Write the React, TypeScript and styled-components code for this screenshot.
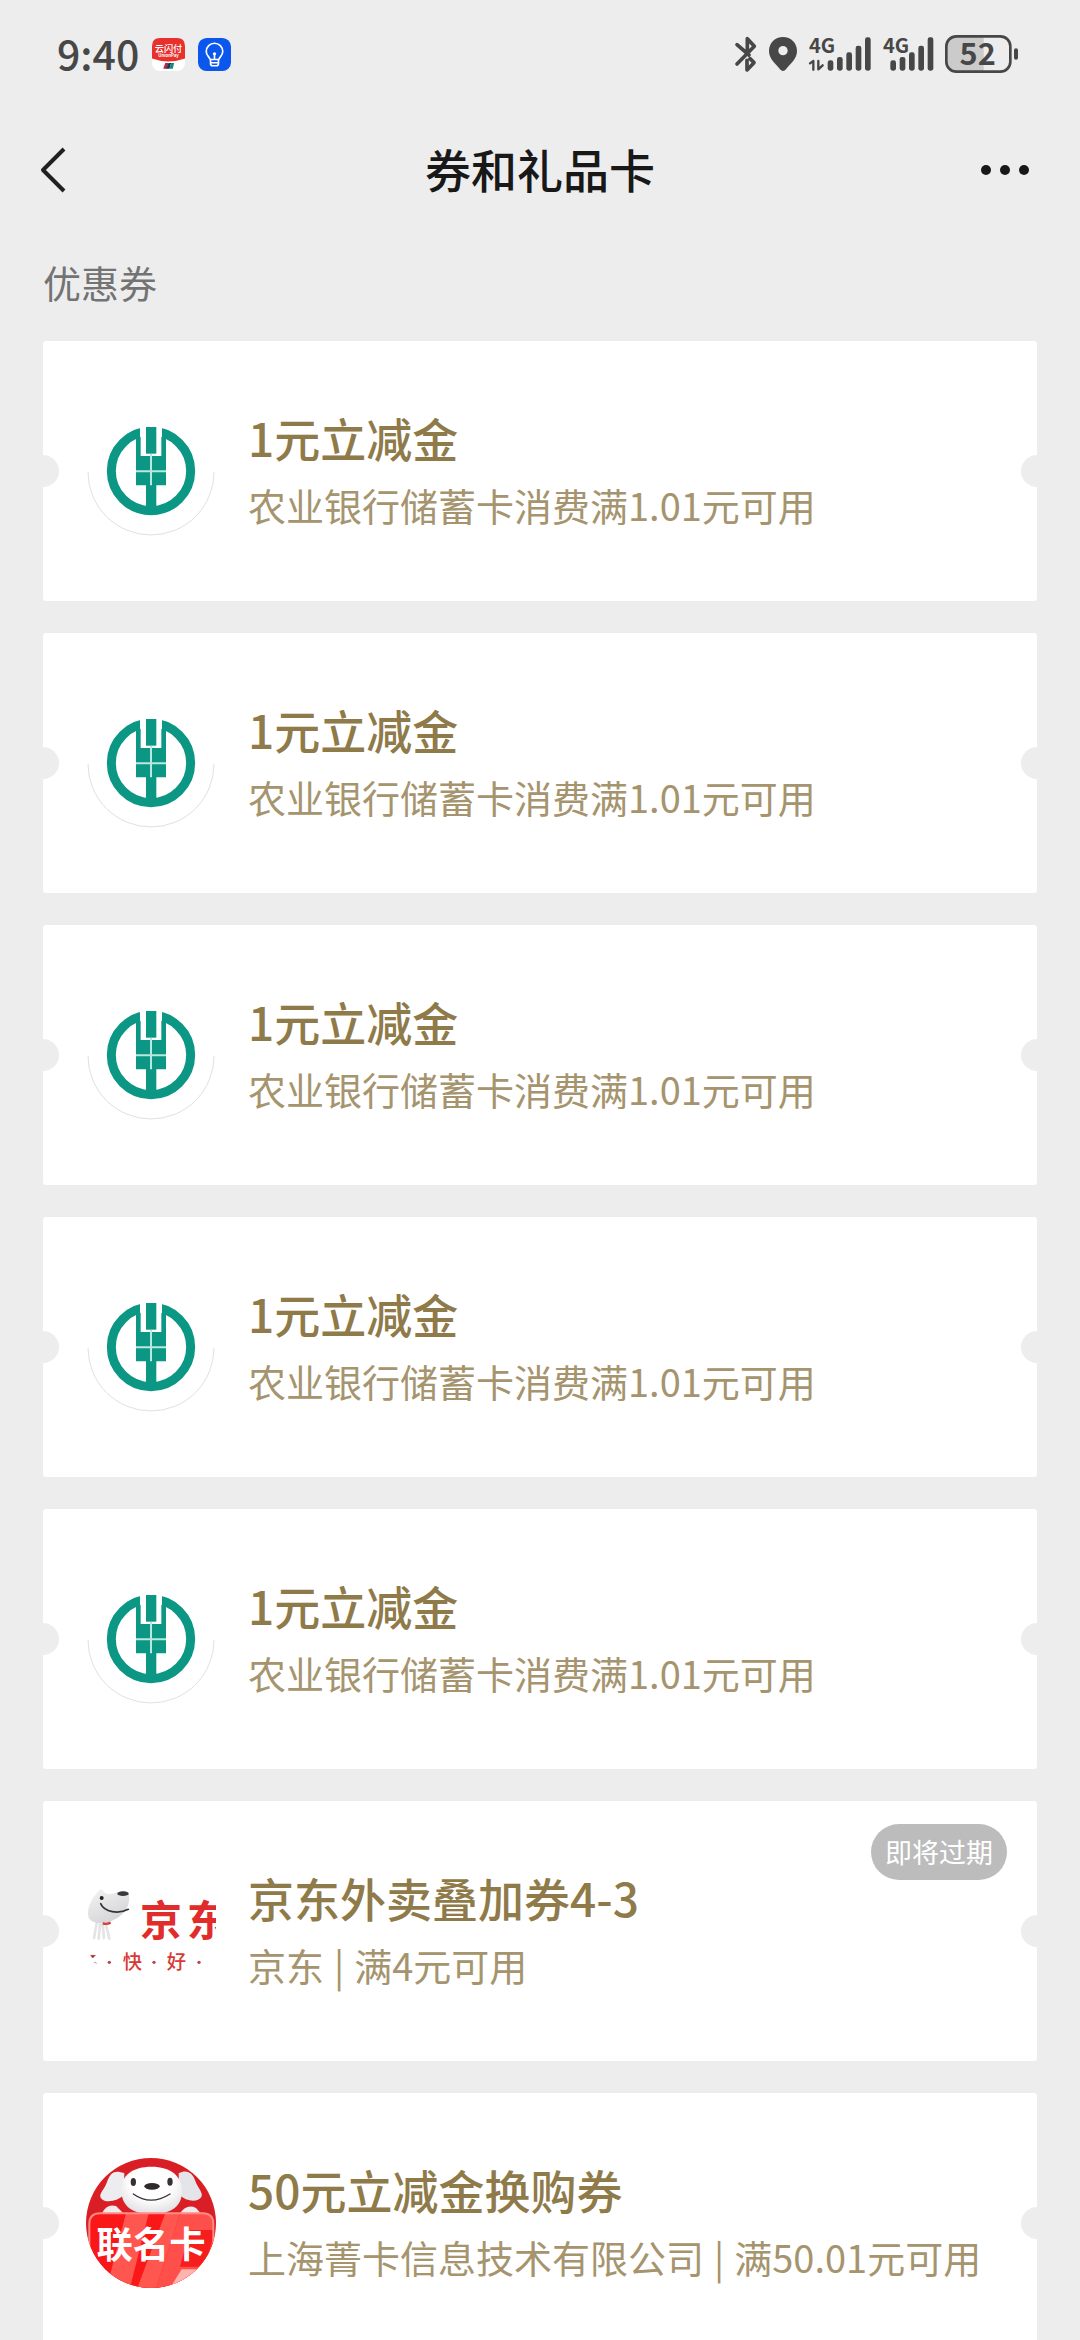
import React from "react";
import styled, { createGlobalStyle } from "styled-components";

const FONT = '"Noto Sans CJK SC", "Noto Sans", sans-serif';

const GlobalStyle = createGlobalStyle`
  * { box-sizing: border-box; }
  body { margin: 0; background: #ededed; font-family: ${FONT}; }
  h1, h2, h3, p, ul { margin: 0; padding: 0; }
  ul { list-style: none; }
`;

const Page = styled.div`
  display: flex;
  flex-direction: column;
  height: 100vh;
  background: #ededed;
`;

const StatusBar = styled.div`
  display: flex;
  flex: none;
  align-items: center;
  justify-content: space-between;
  height: 108px;
  padding: 0 61px 0 57px;
  color: #474747;
`;

const StatusGroup = styled.div<{ $gap: number }>`
  display: flex;
  align-items: center;
  gap: ${(p) => p.$gap}px;
  svg { display: block; overflow: visible; }
`;

const Clock = styled.time`
  padding-bottom: 5px;
  font-size: 41px;
  font-weight: 500;
  line-height: 56px;
`;

const NavBar = styled.header`
  display: grid;
  flex: none;
  grid-template-columns: 120px 1fr 120px;
  align-items: center;
  height: 124px;
`;

const NavTitle = styled.h1`
  padding-bottom: 4px;
  color: #181818;
  font-size: 46px;
  font-weight: 500;
  line-height: 68px;
  text-align: center;
`;

const NavButton = styled.button<{ $end?: boolean }>`
  display: flex;
  align-items: center;
  justify-content: ${(p) => (p.$end ? "flex-end" : "flex-start")};
  height: 100%;
  padding: 0 ${(p) => (p.$end ? 50 : 40)}px;
  border: 0;
  background: none;
  cursor: pointer;
  svg { flex: none; }
`;

const Content = styled.main`
  flex: 1;
  min-height: 0;
  overflow-y: auto;
  padding: 22px 43px 32px;
  scrollbar-width: none;
`;

const SectionTitle = styled.h2`
  margin-bottom: 31px;
  color: #737373;
  font-size: 38px;
  font-weight: 400;
  line-height: 56px;
`;

const CouponList = styled.ul`
  display: flex;
  flex-direction: column;
  gap: 32px;
`;

const CouponCard = styled.a`
  position: relative;
  display: flex;
  align-items: center;
  gap: 32px;
  min-height: 260px;
  padding: 43px;
  overflow: hidden;
  border-radius: 3px;
  background: #fff;
  color: #8f7a49;
  text-decoration: none;
  &::before,
  &::after {
    content: "";
    position: absolute;
    top: calc(50% - 16px);
    width: 32px;
    height: 32px;
    border-radius: 50%;
    background: #ededed;
  }
  &::before { left: -16px; }
  &::after { right: -16px; }
`;

const Logo = styled.svg`
  display: block;
  flex: none;
  width: 130px;
  height: 130px;
`;

const CouponText = styled.div`
  flex: 1;
  min-width: 0;
`;

const CouponName = styled.h3`
  font-size: 46px;
  font-weight: 500;
  line-height: 68px;
`;

const CouponRule = styled.p`
  color: #a5946d;
  font-size: 38px;
  line-height: 68px;
  white-space: nowrap;
`;

const Divider = styled.span`
  margin: 0 10px;
`;

const Badge = styled.span`
  position: absolute;
  top: 23px;
  right: 30px;
  padding: 0 14px;
  border-radius: 28px;
  background: #bcbcbc;
  color: #fff;
  font-size: 27px;
  line-height: 56px;
`;

function UnionPayIcon() {
  return (
    <svg width="33" height="33" viewBox="0 0 100 100" aria-hidden="true">
      <rect width="100" height="100" rx="24" fill="#fff" />
      <path d="M0 62V24Q0 0 24 0H76Q100 0 100 24V62Q50 80 0 62Z" fill="#e8302c" />
      <text x="50" y="42" textAnchor="middle" fontSize="28" fontWeight="500" fill="#fff" fontFamily={FONT}>云闪付</text>
      <text x="50" y="59" textAnchor="middle" fontSize="13" fontWeight="700" fill="#fff" fontFamily={FONT}>UnionPay</text>
      <path d="M40 76H50L45 93H34Z" fill="#b7284c" />
      <path d="M50 76H58L53 93H43Z" fill="#123a52" />
      <path d="M58 76H67L63 93H53Z" fill="#168877" />
    </svg>
  );
}

function BulbIcon() {
  return (
    <svg width="33" height="33" viewBox="0 0 100 100" fill="none" stroke="#fff" strokeWidth="5" strokeLinecap="round" strokeLinejoin="round" aria-hidden="true">
      <rect width="100" height="100" rx="26" fill="#0b57ee" stroke="none" />
      <path d="M37 65C34 56 25 54 25 41A25 25 0 0 1 75 41C75 54 66 56 63 65Z" />
      <path d="M38 66V78Q38 84 44 84H56Q62 84 62 78V66M38 75H62M50 52V64" />
      <circle cx="50" cy="48" r="5" fill="#fff" stroke="none" />
    </svg>
  );
}

function BluetoothIcon() {
  return (
    <svg width="22" height="36" viewBox="0 0 66 108" fill="none" stroke="#474747" strokeWidth="11" strokeLinecap="round" strokeLinejoin="round" aria-label="蓝牙">
      <path d="M6 26L42 57M6 84L58 31L37 8V43M36 73V102L57 80L45 68" />
    </svg>
  );
}

function LocationIcon() {
  return (
    <svg width="28" height="34" viewBox="0 0 84 102" aria-label="定位">
      <path fillRule="evenodd" fill="#474747" d="M42 0C66 0 84 18 84 42C84 67 63 80 51 97Q42 107 33 97C21 80 0 67 0 42C0 18 18 0 42 0ZM42 27A14 14 0 1 0 42 55A14 14 0 1 0 42 27Z" />
    </svg>
  );
}

const BAR_TOPS = [70, 60, 46, 26, 1];

function SignalIcon({ data }: { data?: boolean }) {
  const start = data ? 56 : 22;
  const width = data ? 186 : 150;
  return (
    <svg width={width / 3} height="34" viewBox={`0 0 ${width} 102`} aria-label="移动信号">
      <text x="0" y="48" fontSize="60" fontWeight="700" fill="#474747" fontFamily={FONT}>
        4G
      </text>
      {data && (
        <path d="M3 79L13 72V98M28 72V97L41 85" fill="none" stroke="#474747" strokeWidth="7" strokeLinecap="round" strokeLinejoin="round" />
      )}
      {BAR_TOPS.map((top, i) => (
        <rect key={top} x={start + i * 28} y={top} width="17" height={101 - top} rx="7" fill="#474747" stroke="#ededed" strokeWidth={i < 3 && !data ? 3 : 0} paintOrder="stroke" />
      ))}
    </svg>
  );
}

function BatteryIcon() {
  return (
    <svg width="74" height="38" viewBox="0 0 222 114" aria-label="电量 52%">
      <path d="M34 4H116V110H34Q4 110 4 80V34Q4 4 34 4Z" fill="#cbcbcb" />
      <rect x="4" y="4" width="192" height="106" rx="30" fill="none" stroke="#474747" strokeWidth="8" />
      <rect x="207" y="40" width="12" height="34" rx="6" fill="#474747" />
      <text x="98" y="91" textAnchor="middle" fontSize="92" fontWeight="700" fill="#474747" fontFamily={FONT}>52</text>
    </svg>
  );
}

function BankLogo() {
  return (
    <Logo viewBox="48 -12 390 390" role="img" aria-label="农业银行">
      <path d="M54 186A189 189 0 0 0 432 186" fill="none" stroke="#e0e0e0" strokeWidth="3" />
      <circle cx="243" cy="183" r="119" fill="none" stroke="#0b9784" strokeWidth="27" />
      <rect x="210" y="40" width="66" height="95" fill="#fff" />
      <rect x="228" y="51" width="31" height="80" fill="#0b9784" />
      <path d="M198 84L212 80V138H274V80L288 84V226H259V302H228V226H198Z" fill="#0b9784" />
      <path d="M243 132V226M198 184H288" stroke="#b9e8df" strokeWidth="6" />
    </Logo>
  );
}

function JdLogo() {
  return (
    <Logo viewBox="48 -12 390 390" role="img" aria-label="京东">
      <defs>
        <linearGradient id="jdHead" x1="0" y1="0" x2="0.6" y2="1">
          <stop offset="0" stopColor="#f4f4f4" />
          <stop offset="1" stopColor="#d4d4d7" />
        </linearGradient>
      </defs>
      <path d="M80 160L72 204M90 164L86 206M108 164L118 206M98 164L102 204" stroke="#e4e4e7" strokeWidth="8" strokeLinecap="round" />
      <path d="M56 143C48 112 66 84 86 62C90 56 98 58 102 66C112 76 128 72 143 66Q176 56 177 74C181 108 164 134 132 149C106 164 68 164 56 143Z" fill="url(#jdHead)" />
      <ellipse cx="159" cy="71" rx="17" ry="7" fill="#39393d" />
      <circle cx="95" cy="84" r="6" fill="#222" />
      <path d="M92 101C103 127 146 133 175 118" fill="none" stroke="#333" strokeWidth="5" strokeLinecap="round" />
      <path d="M98 160Q110 164 122 158" fill="none" stroke="#d44340" strokeWidth="7" />
      <g fill="#e02c2a" fontFamily={FONT} fontSize="126" fontWeight="700">
        <text x="210" y="199">京</text>
        <text x="350" y="199">东</text>
      </g>
      <path d="M62 256H76L68 264ZM72 276L80 280" fill="#7b3433" stroke="#c44" strokeWidth="2" />
      <g fill="#d83a36" fontFamily={FONT} fontSize="58" fontWeight="500">
        <text x="158" y="297">快</text>
        <text x="290" y="297">好</text>
      </g>
      <g fill="#b94a47">
        <circle cx="118" cy="277" r="5" />
        <circle cx="252" cy="277" r="5" />
        <circle cx="387" cy="277" r="5" />
      </g>
    </Logo>
  );
}

function CoBrandLogo() {
  return (
    <Logo viewBox="48 54 390 390" role="img" aria-label="联名卡">
      <defs>
        <clipPath id="coRound">
          <circle cx="243" cy="249" r="195" />
        </clipPath>
        <clipPath id="coPanel">
          <path d="M58 460V252Q58 220 90 220H398Q430 220 430 252V460Z" />
        </clipPath>
        <radialGradient id="dogHead" cx="0.5" cy="0.35" r="0.7">
          <stop offset="0.5" stopColor="#fff" />
          <stop offset="1" stopColor="#dcdce0" />
        </radialGradient>
      </defs>
      <g clipPath="url(#coRound)">
        <rect x="48" y="54" width="390" height="390" fill="#d91f25" />
        <path d="M163 100C130 88 121 100 111 126C104 148 86 160 92 173C101 190 139 187 161 166Z" fill="#ededf0" />
        <path d="M326 100C350 87 368 98 376 123C383 144 401 158 394 171C384 188 348 185 328 164Z" fill="#e5e5e9" />
        <path d="M96 220Q110 190 138 198L160 220ZM330 220Q350 190 378 204L392 220Z" fill="#f1e9eb" />
        <path d="M154 158C150 104 190 80 245 80C300 80 338 106 336 158C334 194 310 222 245 222C181 222 158 194 154 158Z" fill="url(#dogHead)" />
        <ellipse cx="190" cy="126" rx="8" ry="12" fill="#3a3032" />
        <ellipse cx="300" cy="125" rx="8" ry="12" fill="#3a3032" />
        <ellipse cx="246" cy="139" rx="23" ry="10" fill="#302a2d" />
        <path d="M190 162Q242 199 300 162" fill="none" stroke="#3a3032" strokeWidth="4" strokeLinecap="round" />
        <g clipPath="url(#coPanel)">
          <rect x="48" y="218" width="390" height="230" fill="#fa1717" />
          <path d="M168 220H236L180 444H110ZM286 220H330L258 444H202Z" fill="#ff5750" />
          <path d="M330 220H430V300L390 444H258Z" fill="#ff4f4a" />
          <path d="M360 270H436L404 380H330Z" fill="#f51d1d" />
          <path d="M335 388H400L380 444H300Z" fill="#ffb3ae" />
        </g>
        <path d="M58 460V252Q58 220 90 220H398Q430 220 430 252V460" fill="none" stroke="#ff8a86" strokeWidth="6" />
        <text x="243" y="353" textAnchor="middle" fontSize="109" fontWeight="700" fill="#fff" fontFamily={FONT}>联名卡</text>
      </g>
    </Logo>
  );
}

type Coupon = {
  logo: React.ComponentType;
  name: string;
  merchant?: string;
  rule: string;
  badge?: string;
};

const bankCoupon: Coupon = { logo: BankLogo, name: "1元立减金", rule: "农业银行储蓄卡消费满1.01元可用" };

const coupons: Coupon[] = [
  bankCoupon,
  bankCoupon,
  bankCoupon,
  bankCoupon,
  bankCoupon,
  { logo: JdLogo, name: "京东外卖叠加券4-3", merchant: "京东", rule: "满4元可用", badge: "即将过期" },
  { logo: CoBrandLogo, name: "50元立减金换购券", merchant: "上海菁卡信息技术有限公司", rule: "满50.01元可用" },
];

export default function App() {
  return (
    <Page>
      <GlobalStyle />
      <StatusBar>
        <StatusGroup $gap={13}>
          <Clock>9:40</Clock>
          <UnionPayIcon />
          <BulbIcon />
        </StatusGroup>
        <StatusGroup $gap={12}>
          <BluetoothIcon />
          <LocationIcon />
          <SignalIcon data />
          <SignalIcon />
          <BatteryIcon />
        </StatusGroup>
      </StatusBar>
      <NavBar>
        <NavButton type="button" aria-label="返回">
          <svg width="26" height="46" viewBox="0 0 26 46" fill="none" stroke="#202020" strokeWidth="4">
            <path d="M24 2L3 23L24 44" strokeLinejoin="round" />
          </svg>
        </NavButton>
        <NavTitle>券和礼品卡</NavTitle>
        <NavButton type="button" aria-label="更多" $end>
          <svg width="50" height="12" viewBox="0 0 50 12" fill="#181818">
            <circle cx="6" cy="6" r="5" />
            <circle cx="25" cy="6" r="5" />
            <circle cx="44" cy="6" r="5" />
          </svg>
        </NavButton>
      </NavBar>
      <Content>
        <SectionTitle>优惠券</SectionTitle>
        <CouponList>
          {coupons.map(({ logo: CouponLogo, name, merchant, rule, badge }, i) => (
            <li key={i}>
              <CouponCard href="#">
                <CouponLogo />
                <CouponText>
                  <CouponName>{name}</CouponName>
                  <CouponRule>
                    {merchant}
                    {merchant && <Divider>|</Divider>}
                    {rule}
                  </CouponRule>
                </CouponText>
                {badge && <Badge>{badge}</Badge>}
              </CouponCard>
            </li>
          ))}
        </CouponList>
      </Content>
    </Page>
  );
}
